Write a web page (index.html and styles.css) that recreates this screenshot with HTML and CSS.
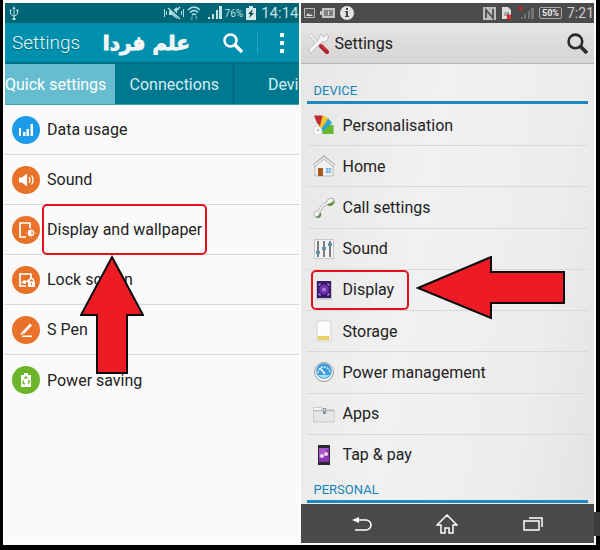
FILE: index.html
```html
<!DOCTYPE html>
<html lang="en">
<head>
  <meta charset="utf-8">
  <title>Settings</title>
  <link rel="stylesheet" href="styles.css">
</head>
<body>

<div class="sheet">

  <!-- Samsung -->
  <section class="phone galaxy">
    <div class="status">
      <svg class="usb" width="10" height="14" viewBox="0 0 10 14" fill="none" stroke="#b5e0e6"><path d="M5 2v11M1.500 5v3L5 10.500 8.500 8V5"/><path d="M3.500 3 5 0l1.500 3zM3.500 12h3v2h-3z" fill="#b5e0e6" stroke="none"/><circle cx="1.500" cy="4.500" r="1" fill="#b5e0e6" stroke="none"/><path d="M7.500 3.500h2v2h-2z" fill="#b5e0e6" stroke="none"/></svg>
      <svg width="20" height="14" viewBox="0 0 20 14"><path d="M5 5h3l5-4v12L8 9H5z" fill="#b5e0e6"/><path d="m5 1 11 12" stroke="#006575" stroke-width="3"/><path d="m4 2 12 11M16 1l-4 4" stroke="#b5e0e6" stroke-width="1.500"/><path d="M.500 3v8M2.500 5v4M17.500 5v4M19.500 3v8" stroke="#b5e0e6"/></svg>
      <svg width="14" height="16" viewBox="0 0 14 16" fill="none" stroke="#b5e0e6" stroke-width="1.500"><path d="M1 5q6-6 12 0M3 7.500q4-4 8 0M5 10q2-2 4 0"/><path d="M5 11v4M3.500 13 5 15M9 15v-4l1.500 2" stroke="#5fa9b3" stroke-width="1"/></svg>
      <svg class="bars" width="14" height="14" viewBox="0 0 14 14" fill="#c4e4e8"><path d="M0 11h2v2H0zM4 8h2v5H4zM8 4h2v9H8zM11 0h3v13h-3z"/></svg>
      <span class="percent">76%</span>
      <svg width="10" height="14" viewBox="0 0 10 14"><path d="M3 0h4v2h3v12H0V2h3z" fill="#d4eaec"/><path d="M7 3 2 8h2.500L3 12l5-5H5.500z" fill="#07404c"/></svg>
      <span class="time">14:14</span>
    </div>
    <header class="bar">
      <h1>Settings</h1>
      <span class="brand" lang="fa" dir="rtl">علم فردا</span>
      <button class="icon-btn search" aria-label="Search">
        <svg width="20" height="20" viewBox="0 0 20 20" fill="none" stroke="#fff"><circle cx="7.500" cy="7.500" r="6" stroke-width="2.500"/><path d="m12 12 7 7" stroke-width="3.500"/></svg>
      </button>
      <button class="icon-btn more" aria-label="More options">
        <svg width="6" height="20" viewBox="0 0 6 20" fill="#fff"><path d="M1 0h4v4H1zM1 8h4v4H1zM1 16h4v4H1z"/></svg>
      </button>
    </header>
    <nav class="tabs">
      <a class="tab active" href="#quick">Quick settings</a>
      <a class="tab" href="#connections">Connections</a>
      <a class="tab last" href="#device">Devi</a>
    </nav>
    <ul class="rows">
      <li><a href="#data">
        <svg class="round blue" viewBox="0 0 28 28" fill="#fff"><path d="M7 12h2v8H7zM11 16h2.500v4H11zM14.500 13H17v7h-2.500zM18.500 8H21v12h-2.500z"/></svg>
        <span>Data usage</span></a></li>
      <li><a href="#sound">
        <svg class="round" viewBox="0 0 28 28"><path d="M7 11.500h3l5-4v13l-5-4H7z" fill="#fff"/><path d="M17 11q2 3 0 6M19.500 9.500q3 4.500 0 9" fill="none" stroke="#fff" stroke-width="1.300"/></svg>
        <span>Sound</span></a></li>
      <li><a href="#display">
        <svg class="round" viewBox="0 0 28 28" fill="none" stroke="#fff"><path d="M18 12V7H8v14h6" stroke-width="1.700"/><circle cx="19" cy="17" r="2.500" stroke-width="1.200"/><path d="M19 14.500a2.500 2.500 0 0 0 0 5z" fill="#fff"/><path d="M19 12.500v1M19 20.500v1M14.500 17h1M22.500 17h1M16 14l.7.7M22 14l-.7.7M16 20l.7-.7M22 20l-.7-.7"/></svg>
        <span class="marked">Display and wallpaper</span></a></li>
      <li><a href="#lock">
        <svg class="round" viewBox="0 0 28 28" fill="none" stroke="#fff"><path d="M19 12V8H8v12h6" stroke-width="1.700"/><path d="m9 17 3-3 2 1 3-2v3h-3v2z" fill="#fff" stroke="none"/><path d="M16 15.500h7V21h-7z" fill="#fff" stroke="none"/><path d="M17.500 16v-1.500a2 2 0 0 1 4 0V16" stroke-width="1.300"/><path d="M19.500 17v2" stroke="#e9722a"/></svg>
        <span>Lock screen</span></a></li>
      <li><a href="#spen">
        <svg class="round" viewBox="0 0 28 28" fill="none" stroke="#fff"><path d="m11 17 8-8.500" stroke-width="2.600"/><path d="m8.500 19 1-3 2 2z" fill="#fff" stroke="none"/><path d="M10 20.300h10" stroke-width="1.500"/></svg>
        <span>S Pen</span></a></li>
      <li><a href="#power">
        <svg class="round green" viewBox="0 0 28 28"><path d="M12 7h4v2h3v12H9V9h3z" fill="#fff"/><path d="m12.500 12.500 1.500-1.500 1.500 1.500M16.500 14l1 2-1.500 1.500M13 18l-2-1 .5-2.500" fill="none" stroke="#6cb52b" stroke-width="1.400"/></svg>
        <span>Power saving</span></a></li>
    </ul>
    <svg class="arrow-up" width="64" height="121" viewBox="0 0 64 121"><path d="m32 3 31 58H47v58H17V61H1z"/></svg>
  </section>

  <!-- Sony -->
  <section class="phone xperia">
    <div class="status">
      <svg width="11" height="10" viewBox="0 0 11 10"><path d="M.500.500h10v9H.500z" fill="#555" stroke="#bbb"/><path d="m2 8 2-3 2 2 1-1 2 2z" fill="#ddd"/></svg>
      <svg width="15" height="10" viewBox="0 0 15 10"><path d="M2 0h13v10H2V7H0V3h2z" fill="#c6c6c6"/><path d="M4 2h9v6H4z" fill="#828282"/><path d="M8 3h1v4H8z" fill="#ddd"/></svg>
      <svg class="info" width="14" height="14" viewBox="0 0 14 14"><circle cx="7" cy="7" r="7" fill="#e2e2e2"/><path d="M6 2h2v2H6zM5 5h3v5h1v1H5v-1h1V6H5z" fill="#444"/></svg>
      <svg width="13" height="13" viewBox="0 0 13 13"><path d="M0 0h13v13H0z" fill="#bdbdbd"/><path d="M3 11V3l7 8V2" fill="none" stroke="#505050" stroke-width="1.800"/></svg>
      <svg width="12" height="13" viewBox="0 0 12 13"><path d="M1 0h6l3 3v9H1z" fill="#ddd"/><path d="M3 5h5v4H3z" fill="#777"/><path d="M4 5v4M6 5v4" stroke="#ddd"/><path d="m6 8 4 4M10 8l-4 4" stroke="#d81f1f" stroke-width="2"/></svg>
      <svg width="16" height="14" viewBox="0 0 16 14"><path d="M3 11h2v2H3zM6 8h2v5H6zM10 5h2v8h-2zM13 2h3v11h-3z" fill="#747474"/><path d="m1 1 3 3M4 1 1 4" stroke="#d81f1f" stroke-width="1.700"/></svg>
      <span class="battery">50%</span>
      <span class="time">7:21</span>
    </div>
    <header class="bar">
      <svg width="21" height="21" viewBox="0 0 21 21"><path d="m2 2 12 13" stroke="#aaa" stroke-width="3"/><path d="m2 2 11 12" stroke="#f5f5f5" stroke-width="2"/><path d="M19 1l-3 3-2-1-1-2q-3 2-2 5L1 16q-1 3 2 4l11-11q4 1 6-3 1-3-1-5" fill="#f3f3f3" stroke="#b2b2b2" stroke-width=".8"/><path d="m13 13 6 6" stroke="#b01c26" stroke-width="4" stroke-linecap="round"/><path d="m13 12 5 5" stroke="#df5961"/></svg>
      <h1>Settings</h1>
      <button class="icon-btn search" aria-label="Search">
        <svg width="21" height="21" viewBox="0 0 20 20" fill="none" stroke="#2b2b2b"><circle cx="8" cy="8" r="6.500" stroke-width="2.500"/><path d="m13 13 6 6" stroke-width="3.500"/></svg>
      </button>
    </header>
    <h2>DEVICE</h2>
    <ul class="rows">
      <li><a href="#personalisation">
        <svg viewBox="0 0 22 22"><path d="M10 11h10.500v9H8z" fill="#65b92e"/><path d="m15 4 4 5-9 8-3-3z" fill="#2fa3d6"/><path d="m9.500 1.500 6 2.500L9 14l-4-1z" fill="#f6c42f"/><path d="M1 1.500h8.500L7 12 4 9z" fill="#bd2d2f"/><path d="M1 12.500q6-1.500 8 3.500v4.500H1z" fill="#fafafa" stroke="#ccc" stroke-width=".5"/><circle cx="5" cy="16" r="1" fill="#999"/></svg>
        <span>Personalisation</span></a></li>
      <li><a href="#home">
        <svg viewBox="0 0 22 22"><path d="M2 11 11 4l9 7v10H2z" fill="#f0f0f0" stroke="#aaa" stroke-width=".7"/><path d="M.7 10.500 11 2.500l10.300 8" fill="none" stroke="#999" stroke-width="3"/><path d="M1 10.500 11 2.800l10 7.700" fill="none" stroke="#eee" stroke-width="1.800"/><path d="M5 13h5v8H5z" fill="#a45c20"/><path d="M13 13h5v5h-5z" fill="#72b6e3"/><path d="M13 15.500h5M15.500 13v5" stroke="#cbe6f5" stroke-width=".6"/></svg>
        <span>Home</span></a></li>
      <li><a href="#call">
        <svg viewBox="0 0 22 22"><path d="M14 6q5 2 7-3 1 4-3 5.500-3 .5-4-1zM6 15q1 3-3 5 4 2 5-2 .5-2-2-3" fill="#4f8f25" stroke="#4f8f25" stroke-width=".6"/><path d="M3 20q-3-1-2-4 2-3 4-2Q8 7 14 5q-1-3 4-3.500 3-.5 3 1.500-1 3-6 4-6 2-8 8 0 4-4 5" fill="#fafafa" stroke="#999" stroke-width=".8"/></svg>
        <span>Call settings</span></a></li>
      <li><a href="#sound2">
        <svg viewBox="0 0 22 22"><path d="M1.500 1.500h19v19h-19z" fill="#f2f2f2" stroke="#c8c8c8"/><path d="M5 3v16M11 3v16M17 3v16" stroke="#555" stroke-width="1.500"/><path d="M3 13h4v3H3zM9 9h4v3H9zM15 5h4v3h-4z" fill="#5d91ad"/></svg>
        <span>Sound</span></a></li>
      <li><a class="marked" href="#display2">
        <svg viewBox="0 0 22 22"><path d="M3 2h16v19H3z" fill="#ccc"/><path d="M4 2h14v17H4z" fill="#3a1768"/><circle cx="11" cy="10.500" r="5" fill="#6a35a8"/><circle cx="11" cy="10.500" r="2" fill="#a97bdc"/><path d="M6 7V5h2M14 5h2v2M6 14v2h2M14 16h2v-2" fill="none" stroke="#b291dd"/></svg>
        <span>Display</span></a></li>
      <li><a href="#storage">
        <svg viewBox="0 0 22 22"><path d="M5 1h13v6l-1 2 1 2v10H4V3z" fill="#fcfcfc" stroke="#c4c4c4" stroke-width=".7"/><path d="M5 16h11v4H5z" fill="#e5c64a"/><path d="M7 16v4M9.500 16v4M12 16v4M14 16v4" stroke="#f5e6a0" stroke-width=".7"/></svg>
        <span>Storage</span></a></li>
      <li><a href="#power2">
        <svg viewBox="0 0 22 22"><circle cx="11" cy="11" r="9.500" fill="#f4f4f4" stroke="#9b9b9b"/><circle cx="11" cy="10" r="7.800" fill="#3d9cd8"/><path d="M5 12a6 6 0 0 1 12 0" fill="none" stroke="#d5effb" stroke-width="1.500" stroke-dasharray="2 1"/><path d="m7 7 5 6" stroke="#fff" stroke-width="1.500"/><path d="M5 14h12q-6 6-12 0" fill="#a9dff5"/></svg>
        <span>Power management</span></a></li>
      <li><a href="#apps">
        <svg viewBox="0 0 22 22"><path d="M0 4h8l2 2h11v13H1z" fill="#c9c9c9"/><path d="M0 8h22l-1 11H1z" fill="#e6e6e6" stroke="#b0b0b0" stroke-width=".6"/><path d="M1 5h7l1 2H1z" fill="#f4f4f4"/><path d="M10 5h3v6h-3z" fill="#7d95a5"/><path d="M11 6h1v2h-1z" fill="#fff"/></svg>
        <span>Apps</span></a></li>
      <li><a href="#tap">
        <svg viewBox="0 0 22 22"><path d="M5 1h12v20H5z" fill="#2a2730"/><path d="M6 4h10v14H6z" fill="#8e35b5"/><path d="M6 4h10L6 14z" fill="#a757c9"/><circle cx="9" cy="12" r="2" fill="#eed9f6"/><circle cx="13" cy="10" r="2" fill="#eed9f6"/></svg>
        <span>Tap &amp; pay</span></a></li>
    </ul>
    <h2 class="personal">PERSONAL</h2>
    <nav class="keys">
      <button class="icon-btn" aria-label="Back"><svg width="20" height="16" viewBox="0 0 20 16" fill="none" stroke="#fff" stroke-width="1.600"><path d="M3 4h11a5 5 0 0 1 0 10H3"/><path d="m0 4 7-3v6z" fill="#fff" stroke="none"/></svg></button>
      <button class="icon-btn" aria-label="Home"><svg width="22" height="20" viewBox="0 0 22 20" fill="none" stroke="#fff" stroke-width="1.500"><path d="M11 1 1 11h4v8h4v-5h4v5h4v-8h4z"/></svg></button>
      <button class="icon-btn" aria-label="Recent apps"><svg width="20" height="14" viewBox="0 0 20 14" fill="none" stroke="#fff" stroke-width="1.500"><path d="M1 4h15v9H1zM6 1h13v9"/></svg></button>
    </nav>
    <svg class="arrow-left" width="150" height="64" viewBox="0 0 150 64"><path d="M2 32 75 1v15h73v31H75v15z"/></svg>
  </section>

</div>

</body>
</html>
```
FILE: styles.css
```css
* {
  box-sizing: border-box;
}
body {
  margin: 0;
  background: #000;
  font-family: Roboto, "Liberation Sans", sans-serif;
  color: #222;
}
h1, h2, ul {
  margin: 0;
  padding: 0;
  font-weight: 400;
}
ul {
  list-style: none;
}
a {
  color: inherit;
  text-decoration: none;
}
.sheet {
  display: grid;
  grid-template-columns: 1fr 1fr;
  gap: 2px;
  min-height: calc(100vh - 5px);
  margin: 0 4px 5px 3px;
  padding: 3px 2px 2px;
  background: #fcfcfc;
}
.phone {
  position: relative;
  display: flex;
  flex-direction: column;
  min-width: 0;
}
.status {
  display: flex;
  align-items: center;
  height: 20px;
  white-space: nowrap;
}
.status svg {
  flex: none;
}
.bar {
  display: flex;
  align-items: center;
  height: 41px;
}
.icon-btn {
  display: flex;
  align-items: center;
  justify-content: center;
  padding: 0;
  border: 0;
  background: none;
}
.rows a {
  display: flex;
  align-items: center;
}
.rows svg {
  flex: none;
}

/* left phone */
.galaxy {
  background: #fafafa;
}
.galaxy .status {
  gap: 3px;
  padding-left: 4px;
  background: #006575;
  color: #c0e2e6;
}
.galaxy .usb {
  margin-right: auto;
}
.galaxy .bars {
  margin-left: 4px;
}
.percent {
  font-size: 10px;
}
.galaxy .time {
  margin-left: 2px;
  font-size: 15px;
}
.galaxy .bar {
  padding-left: 7px;
  background: #0090ad;
  border-bottom: 2px solid #006f85;
  color: #e8f7fa;
}
.galaxy h1 {
  font-size: 19px;
  font-weight: 300;
  text-shadow: 0 1px 1px #00637a;
}
.brand {
  margin: 0 auto;
  padding-right: 10px;
  font: bold 20px "DejaVu Sans", sans-serif;
  color: #f3f6f6;
  -webkit-text-stroke: 1px #f3f6f6;
}
.galaxy .search {
  width: 36px;
  height: 22px;
  border-right: 1px solid #2aa3bb;
  padding-right: 14px;
}
.galaxy .more {
  width: 40px;
  height: 30px;
  padding-left: 8px;
}
.tabs {
  display: grid;
  grid-template-columns: 110fr 118fr 65fr;
  height: 41px;
  border-bottom: 1px solid #4f9dac;
  background: #00788f;
  color: #d6eef2;
  font-size: 16px;
}
.tab {
  display: flex;
  align-items: center;
  justify-content: center;
  min-width: 0;
  overflow: hidden;
  white-space: nowrap;
}
.tab.active {
  justify-content: flex-start;
  background: #66bdd0;
  color: #fff;
}
.tab.last {
  justify-content: flex-end;
  border-left: 1px solid #006176;
}
.galaxy .rows a {
  gap: 2px;
  height: 50px;
  padding-left: 7px;
  border-bottom: 1px solid #d3dae4;
  font-size: 16px;
}
.galaxy .rows li:last-child a {
  border-bottom: 0;
}
.galaxy .rows span {
  display: flex;
  align-items: center;
  padding: 0 3px;
  border: 2px solid transparent;
}
.galaxy .rows span.marked {
  height: 51px;
  border-color: #e5101c;
  border-radius: 5px;
}
.round {
  width: 28px;
  height: 28px;
  border-radius: 50%;
  background: #e9722a;
}
.round.blue {
  background: #1c9be8;
}
.round.green {
  background: #6cb52b;
}

/* right phone */
.xperia {
  background: linear-gradient(100deg, #e6e6e5, #f1f1f1 40%, #ededed 75%, #e2e2e1);
}
.xperia .status {
  gap: 5px;
  padding-left: 3px;
  background: #4b4b4b;
  color: #ccc;
}
.xperia .info {
  margin-right: auto;
}
.battery {
  padding: 0 2px;
  border: 1px solid #aaa;
  border-radius: 2px;
  font-size: 9px;
  font-weight: 700;
  line-height: 10px;
  color: #eee;
}
.xperia .time {
  font-size: 14px;
}
.xperia .bar {
  gap: 6px;
  padding: 0 6px 0 7px;
  background: linear-gradient(#e6e5e4, #d6d5d3);
  border-bottom: 1px solid #b5b4b2;
}
.xperia h1 {
  font-size: 16px;
}
.xperia .search {
  margin-left: auto;
}
.xperia h2 {
  margin: 0 6px;
  padding: 19px 0 2px 7px;
  border-bottom: 3px solid #1d89be;
  font-size: 13px;
  line-height: 16px;
  color: #1584b9;
}
.xperia h2.personal {
  margin-bottom: 1px;
  padding-top: 7px;
}
.xperia .rows {
  flex: 1;
  display: flex;
  flex-direction: column;
  margin: 0 6px;
  padding-top: 1px;
}
.xperia li {
  flex: 1;
  display: flex;
  border-bottom: 1px solid #d9d9d9;
}
.xperia li:last-child {
  border-bottom: 0;
}
.xperia .rows a {
  gap: 8px;
  margin-left: 4px;
  padding: 0 13px 0 0;
  border: 2px solid transparent;
  font-size: 16px;
}
.xperia .rows a.marked {
  border-color: #e5101c;
  border-radius: 5px;
}
.xperia .rows svg {
  width: 22px;
  height: 22px;
}
.keys {
  position: relative;
  display: flex;
  align-items: center;
  justify-content: space-between;
  height: 39px;
  padding: 2px 51px;
  background: #4a4a4a;
}
/* the key bar bleeds over the frame on the right */
.keys::after {
  content: "";
  position: absolute;
  top: 8px;
  right: -6px;
  width: 6px;
  height: 24px;
  background: #3c3c3c;
}

/* pointers over the lists */
.arrow-up, .arrow-left {
  position: absolute;
  fill: #ed1c24;
  stroke: #0a0a0a;
  stroke-width: 2;
}
.arrow-up {
  left: 75px;
  top: 251px;
}
.arrow-left {
  left: 115px;
  top: 253px;
}
```
